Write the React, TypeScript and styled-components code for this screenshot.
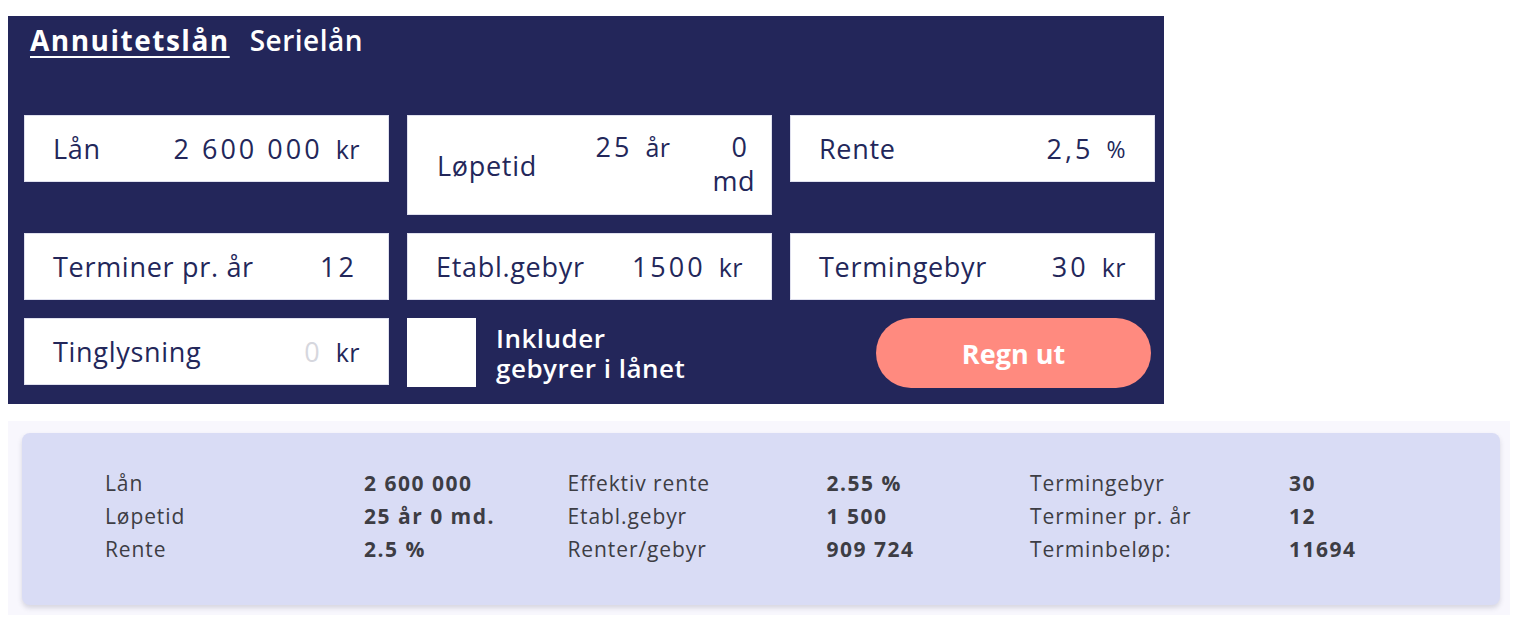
import React, { useState } from "react";
import styled, { createGlobalStyle } from "styled-components";

const GlobalStyle = createGlobalStyle`
	html, body {
		margin: 0;
		background: #ffffff;
	}
	body {
		padding: 16px 0 0 8px;
		font-family: "Open Sans", Lato, sans-serif;
	}
`;

const Page = styled.div`
	width: 1502px;
`;

const Calculator = styled.div`
	width: 1156px;
	box-sizing: border-box;
	background: #23265a;
	padding: 6px 8px 16px 16px;
`;

const Tabs = styled.div`
	display: flex;
	gap: 20px;
	align-items: baseline;
	padding-left: 6px;
	height: 93px;
`;

const Tab = styled.span<{ $active?: boolean }>`
	color: #ffffff;
	font-size: 28px;
	font-weight: ${(p) => (p.$active ? 700 : 600)};
	letter-spacing: ${(p) => (p.$active ? "1.5px" : "0.5px")};
	text-decoration: ${(p) => (p.$active ? "underline" : "none")};
	text-decoration-thickness: 2px;
	text-underline-offset: 5px;
	line-height: 36px;
	cursor: pointer;
`;

const Grid = styled.div`
	display: grid;
	grid-template-columns: repeat(3, 365px);
	column-gap: 18px;
	row-gap: 18px;
	align-items: start;
`;

const Field = styled.div<{ $tall?: boolean }>`
	display: flex;
	align-items: center;
	justify-content: space-between;
	height: ${(p) => (p.$tall ? "100px" : "67px")};
	box-sizing: border-box;
	background: #ffffff;
	border: 1px solid #dfe0ee;
	padding: ${(p) => (p.$tall ? "0 16px 0 29px" : "0 28px 0 28px")};
	color: #23275a;
	font-size: 27px;
	letter-spacing: 0.7px;
`;

const Label = styled.span`
	white-space: nowrap;
`;

const ValueGroup = styled.div<{ $top?: boolean; $end?: number }>`
	display: flex;
	gap: 16px;
	align-items: flex-start;
	align-self: ${(p) => (p.$top ? "flex-start" : "center")};
	padding-top: ${(p) => (p.$top ? "14px" : "0")};
	padding-right: ${(p) => p.$end ?? 0}px;
	line-height: 34px;
`;

// the digits sit wide apart in the inputs
const Value = styled.span<{ $placeholder?: boolean }>`
	color: ${(p) => (p.$placeholder ? "#d6d7de" : "#23275a")};
	letter-spacing: 3px;
	margin-right: -3px;
	text-align: right;
	white-space: nowrap;
`;

const Unit = styled.span<{ $small?: boolean }>`
	font-size: ${(p) => (p.$small ? "23px" : "25px")};
	letter-spacing: 0.5px;
`;

const Stack = styled.div`
	display: flex;
	flex-direction: column;
	align-items: flex-end;
	margin-left: 26px;
	letter-spacing: 0.5px;

	& > ${Value} {
		margin-right: 5px;
	}
`;

const CheckRow = styled.label`
	display: flex;
	align-items: center;
	gap: 20px;
	color: #ffffff;
	font-size: 26px;
	font-weight: 600;
	letter-spacing: 0.5px;
	cursor: pointer;
`;

const CheckBox = styled.span`
	width: 69px;
	height: 69px;
	background: #ffffff;
	flex: none;
`;

const CheckText = styled.span`
	display: flex;
	flex-direction: column;
`;

const CheckLine = styled.span`
	display: block;
	height: 30px;
	line-height: 30px;
	white-space: nowrap;
`;

const ButtonCell = styled.div`
	display: flex;
	justify-content: flex-end;
	padding-right: 4px;
`;

const Button = styled.button`
	width: 275px;
	height: 70px;
	border: none;
	border-radius: 35px;
	background: #ff8a7f;
	color: #ffffff;
	font-family: "Open Sans", sans-serif;
	font-size: 27px;
	font-weight: 700;
	cursor: pointer;
`;

const ResultArea = styled.div`
	margin-top: 17px;
	background: #f8f7fd;
	padding: 12px 10px 10px 14px;
`;

const ResultCard = styled.div`
	background: #d9dcf5;
	border-radius: 8px;
	box-shadow: 0 3px 5px rgba(60, 60, 90, 0.18);
	padding: 34px 20px 39px 83px;
	display: grid;
	grid-template-columns: repeat(3, 259px 203.5px);
	font-size: 21px;
	letter-spacing: 0.9px;
	line-height: 33px;
	color: #3d3d44;
`;

const ResLabel = styled.span``;

const ResValue = styled.span`
	font-weight: 700;
	letter-spacing: 1.5px;
`;

const results: [string, string][][] = [
	[
		["Lån", "2 600 000"],
		["Effektiv rente", "2.55 %"],
		["Termingebyr", "30"],
	],
	[
		["Løpetid", "25 år 0 md."],
		["Etabl.gebyr", "1 500"],
		["Terminer pr. år", "12"],
	],
	[
		["Rente", "2.5 %"],
		["Renter/gebyr", "909 724"],
		["Terminbeløp:", "11694"],
	],
];

export default function App() {
	const [tab, setTab] = useState("annuitet");

	return (
		<>
			<GlobalStyle />
			<Page>
				<Calculator>
					<Tabs>
						<Tab $active={tab === "annuitet"} onClick={() => setTab("annuitet")}>
							Annuitetslån
						</Tab>
						<Tab $active={tab === "serie"} onClick={() => setTab("serie")}>
							Serielån
						</Tab>
					</Tabs>

					<Grid>
						<Field>
							<Label>Lån</Label>
							<ValueGroup>
								<Value>2 600 000</Value>
								<Unit>kr</Unit>
							</ValueGroup>
						</Field>
						<Field $tall>
							<Label>Løpetid</Label>
							<ValueGroup $top>
								<Value>25</Value>
								<Unit>år</Unit>
								<Stack>
									<Value>0</Value>
									<span>md</span>
								</Stack>
							</ValueGroup>
						</Field>
						<Field>
							<Label>Rente</Label>
							<ValueGroup>
								<Value>2,5</Value>
								<Unit $small>%</Unit>
							</ValueGroup>
						</Field>

						<Field>
							<Label>Terminer pr. år</Label>
							<ValueGroup $end={6}>
								<Value>12</Value>
							</ValueGroup>
						</Field>
						<Field>
							<Label>Etabl.gebyr</Label>
							<ValueGroup>
								<Value>1500</Value>
								<Unit>kr</Unit>
							</ValueGroup>
						</Field>
						<Field>
							<Label>Termingebyr</Label>
							<ValueGroup>
								<Value>30</Value>
								<Unit>kr</Unit>
							</ValueGroup>
						</Field>

						<Field>
							<Label>Tinglysning</Label>
							<ValueGroup>
								<Value $placeholder>0</Value>
								<Unit>kr</Unit>
							</ValueGroup>
						</Field>
						<CheckRow>
							<CheckBox />
							<CheckText>
								<CheckLine>Inkluder</CheckLine>
								<CheckLine>gebyrer i lånet</CheckLine>
							</CheckText>
						</CheckRow>
						<ButtonCell>
							<Button>Regn ut</Button>
						</ButtonCell>
					</Grid>
				</Calculator>

				<ResultArea>
					<ResultCard>
						{results.map((row) =>
							row.map(([label, value]) => (
								<React.Fragment key={label}>
									<ResLabel>{label}</ResLabel>
									<ResValue>{value}</ResValue>
								</React.Fragment>
							))
						)}
					</ResultCard>
				</ResultArea>
			</Page>
		</>
	);
}
